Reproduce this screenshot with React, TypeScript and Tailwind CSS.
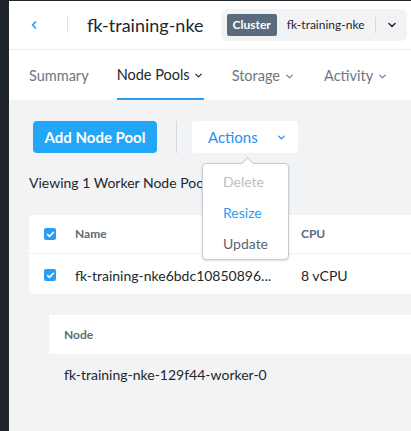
import { ChevronDown, ChevronLeft, Check } from "lucide-react"

function Box({ checked = true }: { checked?: boolean }) {
  return (
    <span className="flex h-[12px] w-[12px] items-center justify-center rounded-[2px] bg-[#2a9df4]">
      {checked && <Check className="h-[9px] w-[9px] text-white" strokeWidth={4} />}
    </span>
  )
}

export default function App() {
  return (
    <div className="flex h-[431px] w-[411px] overflow-hidden bg-[#1f242b] font-['Lato',sans-serif]">
      {/* left rail */}
      <div className="w-[9px] shrink-0" />

      <div className="mt-[1px] flex min-w-0 flex-1 flex-col bg-[#f2f3f5]">
        {/* header */}
        <div className="flex h-[49px] shrink-0 items-center whitespace-nowrap border-b border-[#ececec] bg-white">
          <ChevronLeft className="ml-[19px] h-[12px] w-[12px] shrink-0 text-[#2a9df4]" strokeWidth={3.5} />
          <div className="ml-[27px] h-[16px] w-px shrink-0 bg-[#dcdfe3]" />
          <div className="ml-[19px] shrink-0 text-[18px] text-[#22272e]">fk-training-nke</div>
          <div className="ml-[17px] flex h-[32px] w-[186px] shrink-0 items-center rounded-[6px] bg-[#f2f3f5] pl-[6px]">
            <span className="flex h-[22px] items-center rounded-[2px] bg-[#5a6b7c] px-[6px] text-[12px] font-bold text-white">
              Cluster
            </span>
            <span className="ml-[10px] text-[12px] text-[#22272e]">fk-training-nke</span>
            <div className="ml-[10px] h-[16px] w-px bg-[#d5d9de]" />
            <ChevronDown className="ml-[10px] h-[12px] w-[12px] text-[#22272e]" strokeWidth={3} />
          </div>
        </div>

        {/* tabs */}
        <div className="flex h-[50px] shrink-0 items-stretch whitespace-nowrap bg-white pl-[20px] pt-[2px] text-[14.5px]">
          <div className="flex items-center text-[#6b7785]">Summary</div>
          <div className="ml-[28px] flex items-center border-b-2 border-[#2a9df4] text-[#22272e]">
            Node Pools
            <ChevronDown className="ml-[3px] h-[11px] w-[11px]" strokeWidth={2.5} />
          </div>
          <div className="ml-[28px] flex items-center text-[#6b7785]">
            Storage
            <ChevronDown className="ml-[4px] h-[11px] w-[11px]" strokeWidth={2.5} />
          </div>
          <div className="ml-[29px] flex items-center text-[#6b7785]">
            Activity
            <ChevronDown className="ml-[4px] h-[11px] w-[11px]" strokeWidth={2.5} />
          </div>
        </div>

        {/* content */}
        <div className="flex flex-col pl-[20px]">
          <div className="ml-[4px] mt-[21px] flex items-center">
            <button className="flex h-[32px] w-[124px] items-center justify-center rounded-[4px] bg-[#23a6f7] text-[15px] font-bold text-white">
              Add Node Pool
            </button>
            <div className="ml-[19px] h-[32px] w-px bg-[#d5d9de]" />
            <div className="relative ml-[15px]">
              <button className="flex h-[32px] w-[106px] items-center rounded-[4px] bg-white pl-[16px] text-[15px] text-[#2a8ef0]">
                Actions
                <ChevronDown className="ml-[18px] h-[11px] w-[11px]" strokeWidth={3} />
              </button>
              {/* dropdown menu */}
              <div className="absolute left-[10px] top-[42px] z-10 flex w-[87px] flex-col rounded-[4px] border border-[#c6cbd2] bg-white pl-[20px] pt-[2px] text-[14px] shadow-sm">
                <span className="absolute -top-[5px] left-[40px] h-[9px] w-[9px] rotate-45 border-l border-t border-[#c6cbd2] bg-white" />
                <span className="h-[31px] leading-[31px] text-[#b9bfc6]">Delete</span>
                <span className="h-[31px] leading-[31px] text-[#2a9df4]">Resize</span>
                <span className="h-[31px] leading-[31px] text-[#5b6572]">Update</span>
              </div>
            </div>
          </div>

          <div className="mt-[20px] text-[14px] leading-[20px] text-[#22272e]">Viewing 1 Worker Node Pool</div>

          {/* node pool table */}
          <div className="mt-[22px] flex flex-col rounded-l-[4px] bg-white">
            <div className="flex h-[39px] items-center border-b border-[#eef0f2] pl-[15px]">
              <Box />
              <span className="ml-[19px] w-[226px] text-[12px] font-bold text-[#5c6b7a]">Name</span>
              <span className="text-[12px] font-bold text-[#5c6b7a]">CPU</span>
            </div>
            <div className="flex h-[40px] items-center pl-[15px] pt-[2px]">
              <Box />
              <span className="ml-[19px] w-[226px] truncate pr-[10px] text-[14px] text-[#22272e]">
                fk-training-nke6bdc10850896...
              </span>
              <span className="text-[14px] text-[#22272e]">8 vCPU</span>
            </div>
          </div>

          {/* nodes */}
          <div className="ml-[20px] mt-[21px] flex h-[39px] items-center bg-white pl-[15px] text-[12px] font-bold text-[#5c6b7a]">
            Node
          </div>
          <div className="ml-[35px] mt-[11px] text-[14px] leading-[20px] text-[#22272e]">fk-training-nke-129f44-worker-0</div>
        </div>
      </div>
    </div>
  )
}
